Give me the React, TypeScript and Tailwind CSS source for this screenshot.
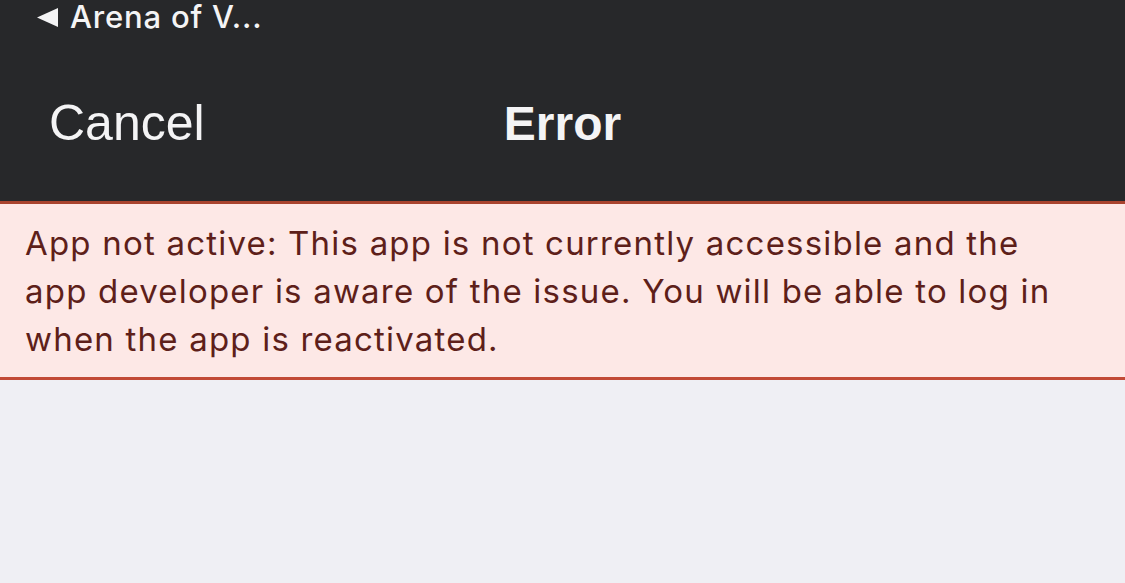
export default function App() {
  return (
    <div className="w-[1125px] h-[583px] flex flex-col bg-[#efeff4] overflow-hidden">
      <Header />
      <ErrorBanner />
      <div className="flex-1 bg-[#efeff4]"></div>
    </div>
  );
}

function Header() {
  return (
    <div className="bg-[#27282a] h-[201px] flex flex-col font-['Liberation_Sans',Arial,sans-serif] text-[#f4f4f5]">
      <div className="h-[46px] flex items-start pl-[37px]">
        <div className="flex items-center h-[33px] gap-[12px]">
          <svg width="21" height="19" viewBox="0 0 21 19" className="mt-[1px]">
            <polygon points="0,9.5 21,0 21,19" fill="#f4f4f5" />
          </svg>
          <span className="text-[31px] leading-[33px] tracking-[0.8px] font-['Inter',sans-serif] font-medium">Arena of V...</span>
        </div>
      </div>
      <div className="relative h-[155px] flex items-center justify-center">
        <span className="absolute left-[49px] text-[50px]">Cancel</span>
        <span className="text-[48px] font-bold">Error</span>
      </div>
    </div>
  );
}

function ErrorBanner() {
  return (
    <div className="border-t-[3px] border-t-[#a9432e] border-b-[3px] border-b-[#c24a36] bg-[#fde8e6] pl-[25px] pr-[40px] pt-[15px] pb-[14px]">
      <p className="font-['Inter',sans-serif] text-[33px] leading-[48px] tracking-[1.2px] text-[#5e1f1a]">
        App not active: This app is not currently accessible and the app developer is aware of the issue. You will be able to log in when the app is reactivated.
      </p>
    </div>
  );
}
